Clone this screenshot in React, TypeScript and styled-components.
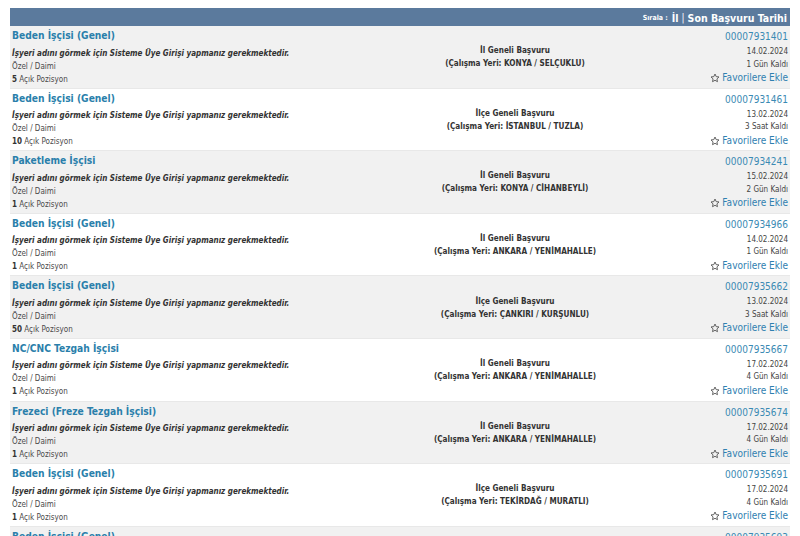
import React from "react";
import styled, {createGlobalStyle} from "styled-components";

const GlobalStyle = createGlobalStyle`
    body {
        margin: 0;
        background: #ffffff;
        font-family: "DejaVu Sans Condensed", "DejaVu Sans", Verdana, sans-serif;
        font-stretch: semi-condensed;
        color: #333333;
    }
`;

const jobs = [
    {title: "Beden İşçisi (Genel)", count: 5, scope: "İl Geneli Başvuru", place: "KONYA / SELÇUKLU", code: "00007931401", date: "14.02.2024", left: "1 Gün Kaldı"},
    {title: "Beden İşçisi (Genel)", count: 10, scope: "İlçe Geneli Başvuru", place: "İSTANBUL / TUZLA", code: "00007931461", date: "13.02.2024", left: "3 Saat Kaldı"},
    {title: "Paketleme İşçisi", count: 1, scope: "İl Geneli Başvuru", place: "KONYA / CİHANBEYLİ", code: "00007934241", date: "15.02.2024", left: "2 Gün Kaldı"},
    {title: "Beden İşçisi (Genel)", count: 1, scope: "İl Geneli Başvuru", place: "ANKARA / YENİMAHALLE", code: "00007934966", date: "14.02.2024", left: "1 Gün Kaldı"},
    {title: "Beden İşçisi (Genel)", count: 50, scope: "İlçe Geneli Başvuru", place: "ÇANKIRI / KURŞUNLU", code: "00007935662", date: "13.02.2024", left: "3 Saat Kaldı"},
    {title: "NC/CNC Tezgah İşçisi", count: 1, scope: "İl Geneli Başvuru", place: "ANKARA / YENİMAHALLE", code: "00007935667", date: "17.02.2024", left: "4 Gün Kaldı"},
    {title: "Frezeci (Freze Tezgah İşçisi)", count: 1, scope: "İl Geneli Başvuru", place: "ANKARA / YENİMAHALLE", code: "00007935674", date: "17.02.2024", left: "4 Gün Kaldı"},
    {title: "Beden İşçisi (Genel)", count: 1, scope: "İlçe Geneli Başvuru", place: "TEKİRDAĞ / MURATLI", code: "00007935691", date: "17.02.2024", left: "4 Gün Kaldı"},
    {title: "Beden İşçisi (Genel)", count: 1, scope: "İlçe Geneli Başvuru", place: "TEKİRDAĞ / MURATLI", code: "00007935693", date: "17.02.2024", left: "4 Gün Kaldı"},
];

const StarIcon = () => (
    <svg width="10" height="10" viewBox="0 0 24 24" fill="none" stroke="#555" strokeWidth="2.2" strokeLinejoin="round">
        <path d="M12 2.5l2.9 6.2 6.7.8-5 4.6 1.3 6.7L12 17.5l-5.9 3.3 1.3-6.7-5-4.6 6.7-.8z" />
    </svg>
);

const App = () => {
    return (
        <>
            <GlobalStyle />
            <Page>
                <SortBar>
                    <SortLabel>Sırala :</SortLabel>
                    <SortLink>İl</SortLink>
                    <SortSep>|</SortSep>
                    <SortLink>Son Başvuru Tarihi</SortLink>
                </SortBar>
                <List>
                    {jobs.map((job, i) => (
                        <Row key={job.code} shaded={i % 2 === 0}>
                            <Info>
                                <Title>{job.title}</Title>
                                <Hidden>İşyeri adını görmek için Sisteme Üye Girişi yapmanız gerekmektedir.</Hidden>
                                <Small>Özel / Daimi</Small>
                                <Small>
                                    <b>{job.count}</b> Açık Pozisyon
                                </Small>
                            </Info>
                            <Place>
                                <PlaceLine>{job.scope}</PlaceLine>
                                <PlaceLine>(Çalışma Yeri: {job.place})</PlaceLine>
                            </Place>
                            <Meta>
                                <Code>{job.code}</Code>
                                <MetaLine>{job.date}</MetaLine>
                                <MetaLine>{job.left}</MetaLine>
                                <Fav>
                                    <StarIcon />
                                    Favorilere Ekle
                                </Fav>
                            </Meta>
                        </Row>
                    ))}
                </List>
            </Page>
        </>
    );
};
export default App;

const Page = styled.div`
    padding: 8px 10px 0 10px;
    height: 536px;
    box-sizing: border-box;
    overflow: hidden;
`;

const SortBar = styled.div`
    height: 18px;
    background: #5b7a9d;
    color: #ffffff;
    display: flex;
    align-items: center;
    justify-content: flex-end;
    gap: 3px;
    padding: 1px 3px 0 0;
    box-sizing: border-box;
    font-weight: 700;
`;

const SortLabel = styled.span`
    font-size: 7px;
    margin-right: 1px;
`;

const SortLink = styled.span`
    font-size: 10.5px;
`;

const SortSep = styled.span`
    font-size: 10px;
    font-weight: 400;
`;

const List = styled.div`
    display: flex;
    flex-direction: column;
`;

const Row = styled.div<{shaded: boolean}>`
    height: 62.6px;
    box-sizing: border-box;
    display: grid;
    grid-template-columns: 400px 210px 1fr;
    background: ${({shaded}) => (shaded ? "#f1f1f1" : "#ffffff")};
    border-bottom: 1px solid #e8e8e8;
`;

const Info = styled.div`
    padding: 3px 0 0 2px;
    display: flex;
    flex-direction: column;
`;

const Title = styled.div`
    font-size: 10.2px;
    line-height: 14px;
    font-weight: 700;
    color: #2a7fab;
    margin-bottom: 3.5px;
`;

const Hidden = styled.div`
    font-size: 8px;
    line-height: 13px;
    font-weight: 700;
    font-style: italic;
    color: #333333;
`;

const Small = styled.div`
    font-size: 8px;
    line-height: 13px;
    color: #4a4a4a;

    b {
        font-weight: 700;
        color: #333333;
    }
`;

const Place = styled.div`
    display: flex;
    flex-direction: column;
    justify-content: center;
    align-items: center;
    padding-top: 1px;
`;

const PlaceLine = styled.div`
    font-size: 8.1px;
    line-height: 13px;
    font-weight: 700;
    color: #333333;
`;

const Meta = styled.div`
    padding: 4px 2px 0 0;
    display: flex;
    flex-direction: column;
    align-items: flex-end;
`;

const Code = styled.div`
    font-size: 10px;
    line-height: 14px;
    color: #3a8ab3;
    margin-bottom: 2px;
`;

const MetaLine = styled.div`
    font-size: 8px;
    line-height: 12.5px;
    color: #444444;
`;

const Fav = styled.div`
    font-size: 10px;
    line-height: 14px;
    color: #2f80b0;
    display: flex;
    align-items: center;
    gap: 2px;
    cursor: pointer;
`;
